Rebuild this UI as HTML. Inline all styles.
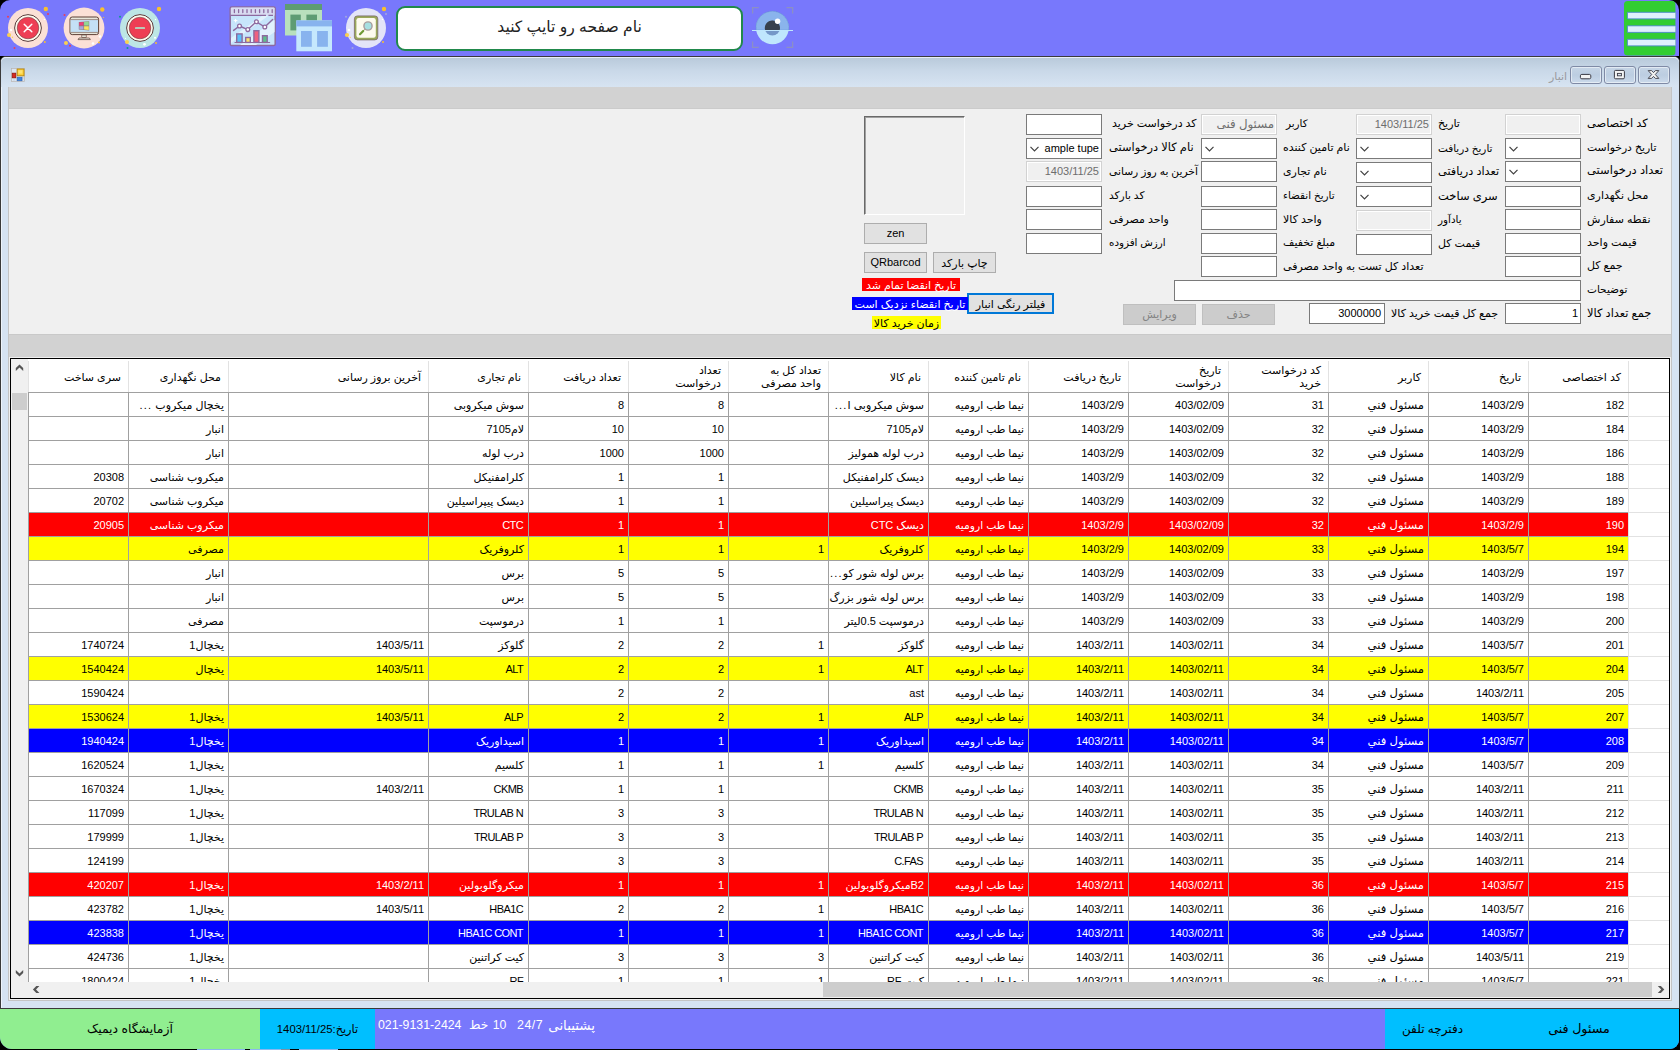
<!DOCTYPE html>
<html lang="fa"><head><meta charset="utf-8"><title>انبار</title>
<style>
html,body{margin:0;padding:0}
body{width:1680px;height:1050px;overflow:hidden;background:#000;position:relative;
 font-family:"Liberation Sans","DejaVu Sans",sans-serif;font-size:11px;color:#000;line-height:13px}
div,span{box-sizing:border-box}
.a{position:absolute}
#top{left:0;top:0;width:1679px;height:56px;background:#7878fc;border-radius:10px 10px 0 0}
#win{left:0;top:56px;width:1680px;height:953px;background:#d6e3f2;border:1px solid #3a3a3a;border-radius:6px 6px 0 0;box-shadow:inset 1px 0 0 #eef4fb}
#ttl{left:1px;top:57px;width:1678px;height:30px;background:linear-gradient(#b8c9da,#c9d8e8 45%,#d7e4f2);border-radius:5px 5px 0 0;box-shadow:inset 0 1px 0 #e8eff8}
.wb{top:66px;width:32px;height:18px;border:1px solid #7f8aa5;border-radius:3px;background:linear-gradient(#c6d5e6,#bccde1 50%,#cbdaeb);box-shadow:inset 0 0 0 1px rgba(255,255,255,.5)}
#client{left:8px;top:87px;width:1664px;height:914px;background:#f0f0f0;border:1px solid #c4c4c4;border-top:0}
#band1{left:9px;top:87px;width:1662px;height:22px;background:#d2d2d2;border-bottom:1px solid #cbcbcb}
#panel{left:9px;top:109px;width:1662px;height:225px;background:#f0f0f0}
#band2{left:9px;top:334px;width:1662px;height:23px;background:#d2d2d2;border-top:1px solid #c9c9c9}
#grid{left:10px;top:358px;width:1660px;height:641px;background:#fff;border:1px solid #000;overflow:hidden}
.lb{position:absolute;white-space:nowrap;direction:rtl;height:13px}
.in{position:absolute;height:21px;background:#fff;border:1px solid #7a7a7a;box-shadow:inset 0 0 0 1px #fff}
.in.d{background:#f0f0f0;border-color:#d2d2d2;color:#6d6d6d}
.in span{position:absolute;right:2px;top:3px;white-space:nowrap}
.btn{position:absolute;height:21px;background:#e1e1e1;border:1px solid #adadad;text-align:center;line-height:18px;white-space:nowrap}
.btn.d{background:#cccccc;border-color:#bfbfbf;color:#838383}
.chev{position:absolute;left:3px;top:7px}

.gr{position:absolute;left:17px;width:1600px;height:24px;border-bottom:1px solid #a0a0a0;background:#fff}
.gr.r{background:#ff0000;color:#fff}.gr.y{background:#ffff00}.gr.b{background:#0000ff;color:#fff}
.gc{position:absolute;top:0;height:23px;border-left:1px solid #a0a0a0;direction:rtl;text-align:right;padding:6px 4px 0 0;white-space:nowrap;overflow:hidden}
.gh{position:absolute;top:2px;height:31px;padding-top:1px;border-left:1px solid #e2e2e2;direction:rtl;text-align:right;padding-right:7px;white-space:nowrap;display:flex;align-items:center;justify-content:flex-start;line-height:13px}
.el{font-style:normal;letter-spacing:1.2px;display:inline-block;direction:ltr}
.rh{position:absolute;left:1617px;width:41px;height:24px;border-left:1px solid #e2e2e2;border-bottom:1px solid #e2e2e2;background:#fff}
</style></head>
<body>
<div class="a" id="top"></div>
<svg class="a" style="left:0;top:0" width="1680" height="56" viewBox="0 0 1680 56"><circle cx="28" cy="28" r="20" fill="#fbe0d6"/><circle cx="28" cy="28" r="13.4" fill="#fdfbee" stroke="#5b3d3d" stroke-width="1"/><circle cx="28" cy="28" r="10.8" fill="#ee3e54" stroke="#5b3d3d" stroke-width="0.5"/><path d="M24.2 24.2 L31.8 31.8 M31.8 24.2 L24.2 31.8" stroke="#fff" stroke-width="1.5" stroke-linecap="round"/><circle cx="45.8" cy="9" r="2.2" fill="#f9c12e"/><circle cx="48" cy="14" r="1" fill="#ee3e54"/><circle cx="8" cy="16.7" r="1" fill="#ee3e54"/><circle cx="9" cy="35" r="2" fill="#fbd04e"/><circle cx="12.5" cy="37.3" r="0.7" fill="#fbd04e"/><circle cx="44.8" cy="42" r="1" fill="#f9c12e"/><circle cx="14.5" cy="48" r="1" fill="#ee3e54"/><circle cx="11" cy="30" r="1.2" fill="#fff"/><circle cx="44.5" cy="19.5" r="0.8" fill="#fff"/><circle cx="84" cy="28" r="20.4" fill="#fbe0d6"/><rect x="70" y="17" width="28.6" height="17.6" rx="2.2" fill="#e9e6da" stroke="#5d4037" stroke-width="1"/><rect x="70.6" y="19.8" width="27.4" height="12.4" fill="#c4e0f6"/><path d="M70.6 19.6 H98 M70.6 32.4 H98" stroke="#6d5147" stroke-width="0.6"/><path d="M78.8 22 L89.2 21.2 V30.4 L78.8 29.6Z" fill="#8a7a78"/><path d="M79.2 22.5 L83.5 22.1 V25.6 H79.2Z" fill="#ee3e7a"/><path d="M84.1 22 L88.8 21.6 V25.6 H84.1Z" fill="#90d895"/><path d="M79.2 26.2 H83.5 V29.6 L79.2 29.2Z" fill="#a9a6da"/><path d="M84.1 26.2 H88.8 V30 L84.1 29.6Z" fill="#f8e660"/><rect x="81.8" y="35" width="4.4" height="2.4" fill="#e9e6da" stroke="#5d4037" stroke-width="0.6"/><path d="M79 38 H89.4 L90.4 39.6 H78Z" fill="#e9e6da" stroke="#5d4037" stroke-width="0.7" stroke-linejoin="round"/><circle cx="102.3" cy="9.5" r="2.2" fill="#f9c12e"/><circle cx="64.5" cy="15" r="1" fill="#ee3e54"/><circle cx="66" cy="43" r="2" fill="#fbd04e"/><circle cx="70" cy="45.8" r="1" fill="#ee3e54"/><circle cx="100" cy="36.5" r="1.2" fill="#fff"/><circle cx="93" cy="43.5" r="1.3" fill="#fff"/><circle cx="99" cy="42.5" r="1" fill="#f9c12e"/><circle cx="103.5" cy="17.5" r="0.6" fill="#f9c12e"/><circle cx="140" cy="28" r="20" fill="#bde6e5"/><circle cx="140" cy="28" r="13.4" fill="#fdfbee" stroke="#5b3d3d" stroke-width="1"/><circle cx="140" cy="28" r="10.8" fill="#ee3e54" stroke="#5b3d3d" stroke-width="0.5"/><rect x="135" y="27" width="10" height="2.1" rx=".4" fill="#b9c7b6"/><circle cx="159" cy="9" r="2.2" fill="#f9c12e"/><circle cx="120" cy="16.7" r="1" fill="#0b9e8a"/><circle cx="127" cy="42" r="2" fill="#fbd04e"/><circle cx="127.5" cy="48" r="1" fill="#0b9e8a"/><circle cx="144.5" cy="44.3" r="1.4" fill="#fff"/><circle cx="155" cy="37.8" r="1" fill="#fff"/><circle cx="156" cy="43" r="1" fill="#f9c12e"/><circle cx="155.5" cy="19.5" r="0.7" fill="#fff"/><circle cx="125.5" cy="38.3" r="0.6" fill="#fff"/><rect x="230.2" y="7" width="45" height="38.6" rx="1.6" fill="#c7e5fb" stroke="#8d6a9f" stroke-width="1.5"/><path d="M231 38 L262 16 H268 L231 43Z M240 45 L274.6 20 V32 L256 45Z" fill="#e2f2fd"/><path d="M230.8 8.4 a1 1 0 0 1 1-1 H273.6 a1 1 0 0 1 1 1 V15.4 H230.8Z" fill="#d9dcf1"/><path d="M230.4 15.4 H266 M268.4 15.4 H273" stroke="#8d6a9f" stroke-width="1.1"/><path d="M234.4 9.6 V12.6 M238.6 9.6 V12.6 M242.8 9.6 V12.6 M247.0 9.6 V12.6 M251.2 9.6 V12.6 M255.4 9.6 V12.6 M259.6 9.6 V12.6 M263.8 9.6 V12.6 M268.0 9.6 V12.6 M272.2 9.6 V12.6 " stroke="#8d6a9f" stroke-width="1.3" stroke-linecap="round"/><path d="M233.6 30.4 L239.5 26 L247.8 29.6 L256.4 21.8 L264.8 27 L272.6 19.4" fill="none" stroke="#8d6a9f" stroke-width="1.4" stroke-linecap="round" stroke-linejoin="round"/><circle cx="239.5" cy="26" r="1.9" fill="#fff" stroke="#8d6a9f" stroke-width="1.3"/><circle cx="247.8" cy="29.6" r="1.9" fill="#fff" stroke="#8d6a9f" stroke-width="1.3"/><circle cx="256.4" cy="21.8" r="1.9" fill="#fff" stroke="#8d6a9f" stroke-width="1.3"/><circle cx="264.8" cy="27" r="1.9" fill="#fff" stroke="#8d6a9f" stroke-width="1.3"/><rect x="236.7" y="33.9" width="5.4" height="8.5" fill="#5bc0f8" stroke="#8d6a9f" stroke-width="1.4"/><rect x="245.7" y="37.5" width="4.6" height="4.899999999999999" fill="#fde36d" stroke="#8d6a9f" stroke-width="1.4"/><rect x="253.9" y="30.7" width="5" height="11.7" fill="#f0607f" stroke="#8d6a9f" stroke-width="1.4"/><rect x="262.5" y="35.7" width="4.7" height="6.699999999999996" fill="#5dc08b" stroke="#8d6a9f" stroke-width="1.4"/><path d="M235 42.5 H269.6" stroke="#8d6a9f" stroke-width="1.2" stroke-linecap="round"/><path d="M235.6 18.4 L236.3 20 L238 20.6 L236.3 21.3 L235.6 23 L234.9 21.3 L233.2 20.6 L234.9 20Z" fill="#fff"/><rect x="285" y="4" width="37" height="31.5" fill="#b8e0bd"/><rect x="285" y="4" width="37" height="6" fill="#5e9c73"/><rect x="290.4" y="14.6" width="10.4" height="15.8" fill="#5e9c73"/><rect x="306.4" y="14.6" width="10.6" height="15.8" fill="#5e9c73"/><rect x="296.3" y="20.4" width="35.7" height="30.9" fill="#c5e8fd"/><rect x="296.3" y="20.4" width="35.7" height="6" fill="#88b3ee"/><rect x="301" y="31" width="10.8" height="15.8" fill="#88b3ee"/><rect x="317.1" y="31" width="10.8" height="15.8" fill="#88b3ee"/><circle cx="366" cy="28" r="20" fill="#e3e4f8"/><rect x="354.4" y="15.9" width="23.4" height="24" rx="3" fill="#9aa85a" stroke="#7b6a6a" stroke-width="0.8"/><rect x="356.4" y="18" width="19.4" height="19.8" rx="2.2" fill="#fdfbee"/><path d="M365.2 29 L363.4 30.8" stroke="#9c9090" stroke-width="0.9"/><path d="M363.2 31 L360 34.2" stroke="#6f9a35" stroke-width="2.2" stroke-linecap="round"/><circle cx="368" cy="26" r="4.1" fill="#a6dfe1" stroke="#a79c9c" stroke-width="1.4"/><circle cx="384" cy="9" r="2.2" fill="#f9c12e"/><circle cx="386" cy="14" r="1" fill="#a3a6de"/><circle cx="346" cy="16.7" r="1" fill="#a3a6de"/><circle cx="347" cy="35" r="2.1" fill="#fbd04e"/><circle cx="350.3" cy="37.3" r="0.6" fill="#fbd04e"/><circle cx="383" cy="42" r="1" fill="#f9c12e"/><circle cx="352.5" cy="48" r="1" fill="#a3a6de"/><circle cx="349" cy="30" r="1.3" fill="#fff"/><circle cx="382.5" cy="19.5" r="0.7" fill="#fff"/><circle cx="772.4" cy="27.8" r="16.4" fill="#bfe6fd"/><path d="M756.2 30.2 A16.4 16.4 0 1 1 788.6 30.2Z" fill="#8ab4ec" stroke="#5f8fce" stroke-width="0.5"/><circle cx="772.4" cy="28" r="7.6" fill="#7497c8"/><path d="M765.1 30.2 A7.6 7.6 0 1 1 779.7 30.2Z" fill="#37404e"/><path d="M752 30.5 H793" stroke="#bfe6fd" stroke-width="1"/><circle cx="777.6" cy="21.3" r="2.7" fill="#fff"/><path d="M752.6 13.6 V7.6 H758.8 M786.4 7.6 H792.6 V13.6 M752.6 41.6 V47.4 H758.8 M786.4 47.4 H792.6 V41.6" fill="none" stroke="#8b8fc4" stroke-width="1.3"/><rect x="1624" y="1" width="51.4" height="54.6" rx="3.5" fill="#32cd32"/><rect x="1627.4" y="12.3" width="48" height="6.6" fill="#dff0fc"/><path d="M1675.4 12.3 H1627.4 V18.9 H1675.4" fill="none" stroke="#4a86c8" stroke-width="0.9"/><rect x="1627.4" y="25.8" width="48" height="6.6" fill="#dff0fc"/><path d="M1675.4 25.8 H1627.4 V32.4 H1675.4" fill="none" stroke="#4a86c8" stroke-width="0.9"/><rect x="1627.4" y="39.3" width="48" height="6.6" fill="#dff0fc"/><path d="M1675.4 39.3 H1627.4 V45.9 H1675.4" fill="none" stroke="#4a86c8" stroke-width="0.9"/></svg>
<div class="a" style="left:396px;top:6px;width:347px;height:45px;background:#fff;border:2px solid #21894b;border-radius:9px;text-align:center;direction:rtl;font-size:15.6px;line-height:38px;color:#222">نام صفحه رو تایپ کنید</div>
<div class="a" id="win"></div><div class="a" id="ttl"></div>
<svg class="a" style="left:10px;top:67px" width="16" height="16" viewBox="10 67 16 16"><rect x="11.4" y="68.5" width="13" height="13" fill="#dbe6f2" stroke="#b9b4b0" stroke-width="0.7"/><path d="M16.6 68.5 V81.5 M11.4 72.8 H16.6 M11.4 78 H24.4 M22.8 76 V81.5 M14 78 V81.5" stroke="#c7c7cc" stroke-width="0.6"/><rect x="17.2" y="69" width="6.8" height="6.8" fill="#fbd03a" stroke="#b8860b" stroke-width="0.9"/><rect x="18.4" y="70.2" width="4" height="3.4" fill="#fde98a" opacity=".7"/><rect x="12.2" y="73.2" width="3.6" height="4.6" fill="#d82a20" stroke="#8e0f0a" stroke-width="0.7"/><rect x="17.2" y="77.2" width="4.8" height="3.6" fill="#3e86e0" stroke="#2a62b4" stroke-width="0.6"/></svg>
<div class="a" style="left:1549px;top:67px;width:27px;height:18px;direction:rtl;font-size:11px;line-height:18px;color:#9a9a9e;text-align:left">انبار</div>
<div class="a wb" style="left:1570px"></div><div class="a wb" style="left:1604px"></div><div class="a wb" style="left:1638px"></div>
<svg class="a" style="left:1570px;top:66px" width="100" height="18" viewBox="1570 66 100 18"><rect x="1580.4" y="74.4" width="10.4" height="4.4" rx="1.4" fill="#f4f4f4" stroke="#3a3a44" stroke-width="1"/><rect x="1614.4" y="70.4" width="10" height="8.4" rx="1.2" fill="#f4f4f4" stroke="#3a3a44" stroke-width="1"/><rect x="1617.4" y="73.4" width="4" height="2.4" fill="#dfe6f0" stroke="#3a3a44" stroke-width="0.9"/><path d="M1648.2 70.6 h3.4 l1.9 2 l1.9 -2 h3.4 l-3.5 3.9 l3.5 3.9 h-3.4 l-1.9 -2 l-1.9 2 h-3.4 l3.5 -3.9 Z" fill="#f4f4f4" stroke="#3a3a44" stroke-width="0.9" stroke-linejoin="round"/></svg>
<div class="a" id="client"></div><div class="a" id="band1"></div><div class="a" id="panel"></div><div class="a" id="band2"></div>
<div class="lb" style="left:1587px;top:117px;font-size:11.38px;">کد اختصاصی</div>
<div class="in d" style="left:1505px;top:114px;width:76px"></div>
<div class="lb" style="left:1587px;top:141px;font-size:10.8px;">تاریخ درخواست</div>
<div class="in" style="left:1505px;top:138px;width:76px"><svg class="chev" width="9" height="6" viewBox="0 0 9 6"><path d="M0.5 0.8 L4.5 4.8 L8.5 0.8" fill="none" stroke="#404040" stroke-width="1.2"/></svg></div>
<div class="lb" style="left:1587px;top:164px;font-size:11.53px;">تعداد درخواستی</div>
<div class="in" style="left:1505px;top:161px;width:76px"><svg class="chev" width="9" height="6" viewBox="0 0 9 6"><path d="M0.5 0.8 L4.5 4.8 L8.5 0.8" fill="none" stroke="#404040" stroke-width="1.2"/></svg></div>
<div class="lb" style="left:1587px;top:189px;">محل نگهداری</div>
<div class="in" style="left:1505px;top:186px;width:76px"></div>
<div class="lb" style="left:1587px;top:213px;">نقطه سفارش</div>
<div class="in" style="left:1505px;top:209px;width:76px"></div>
<div class="lb" style="left:1587px;top:236px;">قیمت واحد</div>
<div class="in" style="left:1505px;top:233px;width:76px"></div>
<div class="lb" style="left:1587px;top:259px;">جمع کل</div>
<div class="in" style="left:1505px;top:256px;width:76px"></div>
<div class="lb" style="left:1587px;top:283px;font-size:10.54px;">توضیحات</div>
<div class="lb" style="left:1587px;top:307px;font-size:11.4px;">جمع تعداد کالا</div>
<div class="in" style="left:1505px;top:303px;width:76px"><span>1</span></div>
<div class="in" style="left:1174px;top:280px;width:407px"></div>
<div class="lb" style="left:1438px;top:117px;">تاریخ</div>
<div class="in d" style="left:1356px;top:114px;width:76px"><span>1403/11/25</span></div>
<div class="lb" style="left:1438px;top:142px;font-size:10.4px;">تاریخ دریافت</div>
<div class="in" style="left:1356px;top:138px;width:76px"><svg class="chev" width="9" height="6" viewBox="0 0 9 6"><path d="M0.5 0.8 L4.5 4.8 L8.5 0.8" fill="none" stroke="#404040" stroke-width="1.2"/></svg></div>
<div class="lb" style="left:1438px;top:165px;font-size:11.3px;">تعداد دریافتی</div>
<div class="in" style="left:1356px;top:162px;width:76px"><svg class="chev" width="9" height="6" viewBox="0 0 9 6"><path d="M0.5 0.8 L4.5 4.8 L8.5 0.8" fill="none" stroke="#404040" stroke-width="1.2"/></svg></div>
<div class="lb" style="left:1438px;top:190px;font-size:11.5px;">سری ساخت</div>
<div class="in" style="left:1356px;top:186px;width:76px"><svg class="chev" width="9" height="6" viewBox="0 0 9 6"><path d="M0.5 0.8 L4.5 4.8 L8.5 0.8" fill="none" stroke="#404040" stroke-width="1.2"/></svg></div>
<div class="lb" style="left:1438px;top:213px;font-size:10.4px;">یادآور</div>
<div class="in d" style="left:1356px;top:210px;width:76px"></div>
<div class="lb" style="left:1438px;top:237px;">قیمت کل</div>
<div class="in" style="left:1356px;top:234px;width:76px"></div>
<div class="lb" style="left:1391px;top:307px;">جمع کل قیمت خرید کالا</div>
<div class="in" style="left:1309px;top:303px;width:76px"><span><i style="font-style:normal;margin-right:1px">3000000</i></span></div>
<div class="lb" style="left:1286px;top:117px;font-size:10.3px;">کاربر</div>
<div class="in d" style="left:1201px;top:114px;width:76px"><span><i style="font-style:normal;font-size:11.8px">مسئول فنی</i></span></div>
<div class="lb" style="left:1283px;top:141px;">نام تامین کننده</div>
<div class="in" style="left:1201px;top:138px;width:76px"><svg class="chev" width="9" height="6" viewBox="0 0 9 6"><path d="M0.5 0.8 L4.5 4.8 L8.5 0.8" fill="none" stroke="#404040" stroke-width="1.2"/></svg></div>
<div class="lb" style="left:1283px;top:165px;">نام تجاری</div>
<div class="in" style="left:1201px;top:161px;width:76px"></div>
<div class="lb" style="left:1283px;top:189px;font-size:10.4px;">تاریخ انقضاء</div>
<div class="in" style="left:1201px;top:186px;width:76px"></div>
<div class="lb" style="left:1283px;top:213px;">واحد کالا</div>
<div class="in" style="left:1201px;top:209px;width:76px"></div>
<div class="lb" style="left:1283px;top:236px;">مبلغ تخفیف</div>
<div class="in" style="left:1201px;top:233px;width:76px"></div>
<div class="lb" style="left:1283px;top:260px;">تعداد کل تست به واحد مصرفی</div>
<div class="in" style="left:1201px;top:256px;width:76px"></div>
<div class="lb" style="left:1112px;top:117px;">کد درخواست خرید</div>
<div class="in" style="left:1026px;top:114px;width:76px"></div>
<div class="lb" style="left:1109px;top:141px;font-size:11.4px;">نام کالا درخواستی</div>
<div class="in" style="left:1026px;top:138px;width:76px"><svg class="chev" width="9" height="6" viewBox="0 0 9 6"><path d="M0.5 0.8 L4.5 4.8 L8.5 0.8" fill="none" stroke="#404040" stroke-width="1.2"/></svg><span>ample tupe</span></div>
<div class="lb" style="left:1109px;top:165px;font-size:10.7px;">آخرین به روز رسانی</div>
<div class="in d" style="left:1026px;top:161px;width:76px"><span>1403/11/25</span></div>
<div class="lb" style="left:1109px;top:189px;font-size:10.6px;">کد بارکد</div>
<div class="in" style="left:1026px;top:186px;width:76px"></div>
<div class="lb" style="left:1109px;top:213px;">واحد مصرفی</div>
<div class="in" style="left:1026px;top:209px;width:76px"></div>
<div class="lb" style="left:1109px;top:236px;font-size:10.3px;">ارزش افزوده</div>
<div class="in" style="left:1026px;top:233px;width:76px"></div>
<div class="a" style="left:864px;top:116px;width:101px;height:99px;background:#f0f0f0;border:1px solid;border-color:#696969 #fff #fff #696969;box-shadow:inset 1px 1px 0 #a0a0a0"></div>
<div class="btn" style="left:864px;top:223px;width:63px">zen</div>
<div class="btn" style="left:864px;top:252px;width:63px">QRbarcod</div>
<div class="btn" style="left:933px;top:252px;width:63px;direction:rtl;line-height:20px">چاپ بارکد</div>
<div class="btn" style="left:967px;top:293px;width:87px;direction:rtl;border:2px solid #0078d7;line-height:18px">فیلتر رنگی انبار</div>
<div class="btn d" style="left:1123px;top:304px;width:73px;direction:rtl">ویرایش</div>
<div class="btn d" style="left:1202px;top:304px;width:73px;direction:rtl">حذف</div>
<div class="lb" style="left:862px;top:278px;width:98px;background:#ff0000;color:#fff;text-align:center;line-height:15px">تاریخ انقضا تمام شد</div>
<div class="lb" style="left:852px;top:297px;width:116px;background:#0000ff;color:#fff;text-align:center;line-height:15px">تاریخ انقضاء نزدیک است</div>
<div class="lb" style="left:872px;top:316px;width:69px;background:#ffff00;text-align:center;line-height:15px">زمان خرید کالا</div>
<div class="a" id="grid">
<div class="a" style="left:17px;top:0;width:1641px;height:34px;border-bottom:1px solid #a0a0a0;background:#fff">
<div class="gh" style="left:1600px;width:41px"></div>
<div class="gh" style="left:1500px;width:100px"><span>کد اختصاصی</span></div>
<div class="gh" style="left:1400px;width:100px"><span>تاریخ</span></div>
<div class="gh" style="left:1300px;width:100px"><span>کاربر</span></div>
<div class="gh" style="left:1200px;width:100px"><span>کد درخواست<br>خرید</span></div>
<div class="gh" style="left:1100px;width:100px"><span>تاریخ<br>درخواست</span></div>
<div class="gh" style="left:1000px;width:100px"><span>تاریخ دریافت</span></div>
<div class="gh" style="left:900px;width:100px"><span>نام تامین کننده</span></div>
<div class="gh" style="left:800px;width:100px"><span>نام کالا</span></div>
<div class="gh" style="left:700px;width:100px"><span>تعداد کل به<br>واحد مصرفی</span></div>
<div class="gh" style="left:600px;width:100px"><span>تعداد<br>درخواست</span></div>
<div class="gh" style="left:500px;width:100px"><span>تعداد دریافت</span></div>
<div class="gh" style="left:400px;width:100px"><span>نام تجاری</span></div>
<div class="gh" style="left:200px;width:200px"><span>آخرین بروز رسانی</span></div>
<div class="gh" style="left:100px;width:100px"><span>محل نگهداری</span></div>
<div class="gh" style="left:0px;width:100px"><span>سری ساخت</span></div>
</div>
<div class="gr " style="top:34px">
<div class="gc" style="left:1500px;width:100px">182</div>
<div class="gc" style="left:1400px;width:100px">1403/2/9</div>
<div class="gc" style="left:1300px;width:100px;font-size:11.6px;padding-top:5px">مسئول فني</div>
<div class="gc" style="left:1200px;width:100px">31</div>
<div class="gc" style="left:1100px;width:100px">403/02/09</div>
<div class="gc" style="left:1000px;width:100px">1403/2/9</div>
<div class="gc" style="left:900px;width:100px;font-size:10.75px">نیما طب ارومیه</div>
<div class="gc" style="left:800px;width:100px">سوش میکروبی ا<i class="el">...</i></div>
<div class="gc" style="left:700px;width:100px"></div>
<div class="gc" style="left:600px;width:100px">8</div>
<div class="gc" style="left:500px;width:100px">8</div>
<div class="gc" style="left:400px;width:100px">سوش میکروبی</div>
<div class="gc" style="left:200px;width:200px"></div>
<div class="gc" style="left:100px;width:100px">یخچال میکروب <i class="el">...</i></div>
<div class="gc" style="left:0px;width:100px"></div>
</div>
<div class="rh" style="top:34px"></div>
<div class="gr " style="top:58px">
<div class="gc" style="left:1500px;width:100px">184</div>
<div class="gc" style="left:1400px;width:100px">1403/2/9</div>
<div class="gc" style="left:1300px;width:100px;font-size:11.6px;padding-top:5px">مسئول فني</div>
<div class="gc" style="left:1200px;width:100px">32</div>
<div class="gc" style="left:1100px;width:100px">1403/02/09</div>
<div class="gc" style="left:1000px;width:100px">1403/2/9</div>
<div class="gc" style="left:900px;width:100px;font-size:10.75px">نیما طب ارومیه</div>
<div class="gc" style="left:800px;width:100px">لام7105</div>
<div class="gc" style="left:700px;width:100px"></div>
<div class="gc" style="left:600px;width:100px">10</div>
<div class="gc" style="left:500px;width:100px">10</div>
<div class="gc" style="left:400px;width:100px">لام7105</div>
<div class="gc" style="left:200px;width:200px"></div>
<div class="gc" style="left:100px;width:100px">انبار</div>
<div class="gc" style="left:0px;width:100px"></div>
</div>
<div class="rh" style="top:58px"></div>
<div class="gr " style="top:82px">
<div class="gc" style="left:1500px;width:100px">186</div>
<div class="gc" style="left:1400px;width:100px">1403/2/9</div>
<div class="gc" style="left:1300px;width:100px;font-size:11.6px;padding-top:5px">مسئول فني</div>
<div class="gc" style="left:1200px;width:100px">32</div>
<div class="gc" style="left:1100px;width:100px">1403/02/09</div>
<div class="gc" style="left:1000px;width:100px">1403/2/9</div>
<div class="gc" style="left:900px;width:100px;font-size:10.75px">نیما طب ارومیه</div>
<div class="gc" style="left:800px;width:100px">درب لوله همولیز</div>
<div class="gc" style="left:700px;width:100px"></div>
<div class="gc" style="left:600px;width:100px">1000</div>
<div class="gc" style="left:500px;width:100px">1000</div>
<div class="gc" style="left:400px;width:100px">درب لوله</div>
<div class="gc" style="left:200px;width:200px"></div>
<div class="gc" style="left:100px;width:100px">انبار</div>
<div class="gc" style="left:0px;width:100px"></div>
</div>
<div class="rh" style="top:82px"></div>
<div class="gr " style="top:106px">
<div class="gc" style="left:1500px;width:100px">188</div>
<div class="gc" style="left:1400px;width:100px">1403/2/9</div>
<div class="gc" style="left:1300px;width:100px;font-size:11.6px;padding-top:5px">مسئول فني</div>
<div class="gc" style="left:1200px;width:100px">32</div>
<div class="gc" style="left:1100px;width:100px">1403/02/09</div>
<div class="gc" style="left:1000px;width:100px">1403/2/9</div>
<div class="gc" style="left:900px;width:100px;font-size:10.75px">نیما طب ارومیه</div>
<div class="gc" style="left:800px;width:100px">دیسک کلرامفنیکل</div>
<div class="gc" style="left:700px;width:100px"></div>
<div class="gc" style="left:600px;width:100px">1</div>
<div class="gc" style="left:500px;width:100px">1</div>
<div class="gc" style="left:400px;width:100px">کلرامفنیکل</div>
<div class="gc" style="left:200px;width:200px"></div>
<div class="gc" style="left:100px;width:100px">میکروب شناسی</div>
<div class="gc" style="left:0px;width:100px">20308</div>
</div>
<div class="rh" style="top:106px"></div>
<div class="gr " style="top:130px">
<div class="gc" style="left:1500px;width:100px">189</div>
<div class="gc" style="left:1400px;width:100px">1403/2/9</div>
<div class="gc" style="left:1300px;width:100px;font-size:11.6px;padding-top:5px">مسئول فني</div>
<div class="gc" style="left:1200px;width:100px">32</div>
<div class="gc" style="left:1100px;width:100px">1403/02/09</div>
<div class="gc" style="left:1000px;width:100px">1403/2/9</div>
<div class="gc" style="left:900px;width:100px;font-size:10.75px">نیما طب ارومیه</div>
<div class="gc" style="left:800px;width:100px">دیسک پیراسیلین</div>
<div class="gc" style="left:700px;width:100px"></div>
<div class="gc" style="left:600px;width:100px">1</div>
<div class="gc" style="left:500px;width:100px">1</div>
<div class="gc" style="left:400px;width:100px">دیسک پیپراسیلین</div>
<div class="gc" style="left:200px;width:200px"></div>
<div class="gc" style="left:100px;width:100px">میکروب شناسی</div>
<div class="gc" style="left:0px;width:100px">20702</div>
</div>
<div class="rh" style="top:130px"></div>
<div class="gr r" style="top:154px">
<div class="gc" style="left:1500px;width:100px">190</div>
<div class="gc" style="left:1400px;width:100px">1403/2/9</div>
<div class="gc" style="left:1300px;width:100px;font-size:11.6px;padding-top:5px">مسئول فني</div>
<div class="gc" style="left:1200px;width:100px">32</div>
<div class="gc" style="left:1100px;width:100px">1403/02/09</div>
<div class="gc" style="left:1000px;width:100px">1403/2/9</div>
<div class="gc" style="left:900px;width:100px;font-size:10.75px">نیما طب ارومیه</div>
<div class="gc" style="left:800px;width:100px">دیسک CTC</div>
<div class="gc" style="left:700px;width:100px"></div>
<div class="gc" style="left:600px;width:100px">1</div>
<div class="gc" style="left:500px;width:100px">1</div>
<div class="gc" style="left:400px;width:100px;letter-spacing:-.6px;padding-right:5px">CTC</div>
<div class="gc" style="left:200px;width:200px"></div>
<div class="gc" style="left:100px;width:100px">میکروب شناسی</div>
<div class="gc" style="left:0px;width:100px">20905</div>
</div>
<div class="rh" style="top:154px"></div>
<div class="gr y" style="top:178px">
<div class="gc" style="left:1500px;width:100px">194</div>
<div class="gc" style="left:1400px;width:100px">1403/5/7</div>
<div class="gc" style="left:1300px;width:100px;font-size:11.6px;padding-top:5px">مسئول فني</div>
<div class="gc" style="left:1200px;width:100px">33</div>
<div class="gc" style="left:1100px;width:100px">1403/02/09</div>
<div class="gc" style="left:1000px;width:100px">1403/2/9</div>
<div class="gc" style="left:900px;width:100px;font-size:10.75px">نیما طب ارومیه</div>
<div class="gc" style="left:800px;width:100px">کلروفریک</div>
<div class="gc" style="left:700px;width:100px">1</div>
<div class="gc" style="left:600px;width:100px">1</div>
<div class="gc" style="left:500px;width:100px">1</div>
<div class="gc" style="left:400px;width:100px">کلروفریک</div>
<div class="gc" style="left:200px;width:200px"></div>
<div class="gc" style="left:100px;width:100px">مصرفی</div>
<div class="gc" style="left:0px;width:100px"></div>
</div>
<div class="rh" style="top:178px"></div>
<div class="gr " style="top:202px">
<div class="gc" style="left:1500px;width:100px">197</div>
<div class="gc" style="left:1400px;width:100px">1403/2/9</div>
<div class="gc" style="left:1300px;width:100px;font-size:11.6px;padding-top:5px">مسئول فني</div>
<div class="gc" style="left:1200px;width:100px">33</div>
<div class="gc" style="left:1100px;width:100px">1403/02/09</div>
<div class="gc" style="left:1000px;width:100px">1403/2/9</div>
<div class="gc" style="left:900px;width:100px;font-size:10.75px">نیما طب ارومیه</div>
<div class="gc" style="left:800px;width:100px">برس لوله شور کو<i class="el">...</i></div>
<div class="gc" style="left:700px;width:100px"></div>
<div class="gc" style="left:600px;width:100px">5</div>
<div class="gc" style="left:500px;width:100px">5</div>
<div class="gc" style="left:400px;width:100px">برس</div>
<div class="gc" style="left:200px;width:200px"></div>
<div class="gc" style="left:100px;width:100px">انبار</div>
<div class="gc" style="left:0px;width:100px"></div>
</div>
<div class="rh" style="top:202px"></div>
<div class="gr " style="top:226px">
<div class="gc" style="left:1500px;width:100px">198</div>
<div class="gc" style="left:1400px;width:100px">1403/2/9</div>
<div class="gc" style="left:1300px;width:100px;font-size:11.6px;padding-top:5px">مسئول فني</div>
<div class="gc" style="left:1200px;width:100px">33</div>
<div class="gc" style="left:1100px;width:100px">1403/02/09</div>
<div class="gc" style="left:1000px;width:100px">1403/2/9</div>
<div class="gc" style="left:900px;width:100px;font-size:10.75px">نیما طب ارومیه</div>
<div class="gc" style="left:800px;width:100px">برس لوله شور بزرگ</div>
<div class="gc" style="left:700px;width:100px"></div>
<div class="gc" style="left:600px;width:100px">5</div>
<div class="gc" style="left:500px;width:100px">5</div>
<div class="gc" style="left:400px;width:100px">برس</div>
<div class="gc" style="left:200px;width:200px"></div>
<div class="gc" style="left:100px;width:100px">انبار</div>
<div class="gc" style="left:0px;width:100px"></div>
</div>
<div class="rh" style="top:226px"></div>
<div class="gr " style="top:250px">
<div class="gc" style="left:1500px;width:100px">200</div>
<div class="gc" style="left:1400px;width:100px">1403/2/9</div>
<div class="gc" style="left:1300px;width:100px;font-size:11.6px;padding-top:5px">مسئول فني</div>
<div class="gc" style="left:1200px;width:100px">33</div>
<div class="gc" style="left:1100px;width:100px">1403/02/09</div>
<div class="gc" style="left:1000px;width:100px">1403/2/9</div>
<div class="gc" style="left:900px;width:100px;font-size:10.75px">نیما طب ارومیه</div>
<div class="gc" style="left:800px;width:100px">درموسپت 0.5لیتر</div>
<div class="gc" style="left:700px;width:100px"></div>
<div class="gc" style="left:600px;width:100px">1</div>
<div class="gc" style="left:500px;width:100px">1</div>
<div class="gc" style="left:400px;width:100px">درموسپت</div>
<div class="gc" style="left:200px;width:200px"></div>
<div class="gc" style="left:100px;width:100px">مصرفی</div>
<div class="gc" style="left:0px;width:100px"></div>
</div>
<div class="rh" style="top:250px"></div>
<div class="gr " style="top:274px">
<div class="gc" style="left:1500px;width:100px">201</div>
<div class="gc" style="left:1400px;width:100px">1403/5/7</div>
<div class="gc" style="left:1300px;width:100px;font-size:11.6px;padding-top:5px">مسئول فني</div>
<div class="gc" style="left:1200px;width:100px">34</div>
<div class="gc" style="left:1100px;width:100px">1403/02/11</div>
<div class="gc" style="left:1000px;width:100px">1403/2/11</div>
<div class="gc" style="left:900px;width:100px;font-size:10.75px">نیما طب ارومیه</div>
<div class="gc" style="left:800px;width:100px">گلوکز</div>
<div class="gc" style="left:700px;width:100px">1</div>
<div class="gc" style="left:600px;width:100px">2</div>
<div class="gc" style="left:500px;width:100px">2</div>
<div class="gc" style="left:400px;width:100px">گلوکز</div>
<div class="gc" style="left:200px;width:200px">1403/5/11</div>
<div class="gc" style="left:100px;width:100px">یخچال1</div>
<div class="gc" style="left:0px;width:100px">1740724</div>
</div>
<div class="rh" style="top:274px"></div>
<div class="gr y" style="top:298px">
<div class="gc" style="left:1500px;width:100px">204</div>
<div class="gc" style="left:1400px;width:100px">1403/5/7</div>
<div class="gc" style="left:1300px;width:100px;font-size:11.6px;padding-top:5px">مسئول فني</div>
<div class="gc" style="left:1200px;width:100px">34</div>
<div class="gc" style="left:1100px;width:100px">1403/02/11</div>
<div class="gc" style="left:1000px;width:100px">1403/2/11</div>
<div class="gc" style="left:900px;width:100px;font-size:10.75px">نیما طب ارومیه</div>
<div class="gc" style="left:800px;width:100px;letter-spacing:-.6px;padding-right:5px">ALT</div>
<div class="gc" style="left:700px;width:100px">1</div>
<div class="gc" style="left:600px;width:100px">2</div>
<div class="gc" style="left:500px;width:100px">2</div>
<div class="gc" style="left:400px;width:100px;letter-spacing:-.6px;padding-right:5px">ALT</div>
<div class="gc" style="left:200px;width:200px">1403/5/11</div>
<div class="gc" style="left:100px;width:100px">یخچال</div>
<div class="gc" style="left:0px;width:100px">1540424</div>
</div>
<div class="rh" style="top:298px"></div>
<div class="gr " style="top:322px">
<div class="gc" style="left:1500px;width:100px">205</div>
<div class="gc" style="left:1400px;width:100px">1403/2/11</div>
<div class="gc" style="left:1300px;width:100px;font-size:11.6px;padding-top:5px">مسئول فني</div>
<div class="gc" style="left:1200px;width:100px">34</div>
<div class="gc" style="left:1100px;width:100px">1403/02/11</div>
<div class="gc" style="left:1000px;width:100px">1403/2/11</div>
<div class="gc" style="left:900px;width:100px;font-size:10.75px">نیما طب ارومیه</div>
<div class="gc" style="left:800px;width:100px">ast</div>
<div class="gc" style="left:700px;width:100px"></div>
<div class="gc" style="left:600px;width:100px">2</div>
<div class="gc" style="left:500px;width:100px">2</div>
<div class="gc" style="left:400px;width:100px"></div>
<div class="gc" style="left:200px;width:200px"></div>
<div class="gc" style="left:100px;width:100px"></div>
<div class="gc" style="left:0px;width:100px">1590424</div>
</div>
<div class="rh" style="top:322px"></div>
<div class="gr y" style="top:346px">
<div class="gc" style="left:1500px;width:100px">207</div>
<div class="gc" style="left:1400px;width:100px">1403/5/7</div>
<div class="gc" style="left:1300px;width:100px;font-size:11.6px;padding-top:5px">مسئول فني</div>
<div class="gc" style="left:1200px;width:100px">34</div>
<div class="gc" style="left:1100px;width:100px">1403/02/11</div>
<div class="gc" style="left:1000px;width:100px">1403/2/11</div>
<div class="gc" style="left:900px;width:100px;font-size:10.75px">نیما طب ارومیه</div>
<div class="gc" style="left:800px;width:100px;letter-spacing:-.6px;padding-right:5px">ALP</div>
<div class="gc" style="left:700px;width:100px">1</div>
<div class="gc" style="left:600px;width:100px">2</div>
<div class="gc" style="left:500px;width:100px">2</div>
<div class="gc" style="left:400px;width:100px;letter-spacing:-.6px;padding-right:5px">ALP</div>
<div class="gc" style="left:200px;width:200px">1403/5/11</div>
<div class="gc" style="left:100px;width:100px">یخچال1</div>
<div class="gc" style="left:0px;width:100px">1530624</div>
</div>
<div class="rh" style="top:346px"></div>
<div class="gr b" style="top:370px">
<div class="gc" style="left:1500px;width:100px">208</div>
<div class="gc" style="left:1400px;width:100px">1403/5/7</div>
<div class="gc" style="left:1300px;width:100px;font-size:11.6px;padding-top:5px">مسئول فني</div>
<div class="gc" style="left:1200px;width:100px">34</div>
<div class="gc" style="left:1100px;width:100px">1403/02/11</div>
<div class="gc" style="left:1000px;width:100px">1403/2/11</div>
<div class="gc" style="left:900px;width:100px;font-size:10.75px">نیما طب ارومیه</div>
<div class="gc" style="left:800px;width:100px">اسیداوریک</div>
<div class="gc" style="left:700px;width:100px">1</div>
<div class="gc" style="left:600px;width:100px">1</div>
<div class="gc" style="left:500px;width:100px">1</div>
<div class="gc" style="left:400px;width:100px">اسیداوریک</div>
<div class="gc" style="left:200px;width:200px"></div>
<div class="gc" style="left:100px;width:100px">یخچال1</div>
<div class="gc" style="left:0px;width:100px">1940424</div>
</div>
<div class="rh" style="top:370px"></div>
<div class="gr " style="top:394px">
<div class="gc" style="left:1500px;width:100px">209</div>
<div class="gc" style="left:1400px;width:100px">1403/5/7</div>
<div class="gc" style="left:1300px;width:100px;font-size:11.6px;padding-top:5px">مسئول فني</div>
<div class="gc" style="left:1200px;width:100px">34</div>
<div class="gc" style="left:1100px;width:100px">1403/02/11</div>
<div class="gc" style="left:1000px;width:100px">1403/2/11</div>
<div class="gc" style="left:900px;width:100px;font-size:10.75px">نیما طب ارومیه</div>
<div class="gc" style="left:800px;width:100px">کلسیم</div>
<div class="gc" style="left:700px;width:100px">1</div>
<div class="gc" style="left:600px;width:100px">1</div>
<div class="gc" style="left:500px;width:100px">1</div>
<div class="gc" style="left:400px;width:100px">کلسیم</div>
<div class="gc" style="left:200px;width:200px"></div>
<div class="gc" style="left:100px;width:100px">یخچال1</div>
<div class="gc" style="left:0px;width:100px">1620524</div>
</div>
<div class="rh" style="top:394px"></div>
<div class="gr " style="top:418px">
<div class="gc" style="left:1500px;width:100px">211</div>
<div class="gc" style="left:1400px;width:100px">1403/2/11</div>
<div class="gc" style="left:1300px;width:100px;font-size:11.6px;padding-top:5px">مسئول فني</div>
<div class="gc" style="left:1200px;width:100px">35</div>
<div class="gc" style="left:1100px;width:100px">1403/02/11</div>
<div class="gc" style="left:1000px;width:100px">1403/2/11</div>
<div class="gc" style="left:900px;width:100px;font-size:10.75px">نیما طب ارومیه</div>
<div class="gc" style="left:800px;width:100px;letter-spacing:-.6px;padding-right:5px">CKMB</div>
<div class="gc" style="left:700px;width:100px"></div>
<div class="gc" style="left:600px;width:100px">1</div>
<div class="gc" style="left:500px;width:100px">1</div>
<div class="gc" style="left:400px;width:100px;letter-spacing:-.6px;padding-right:5px">CKMB</div>
<div class="gc" style="left:200px;width:200px">1403/2/11</div>
<div class="gc" style="left:100px;width:100px">یخچال1</div>
<div class="gc" style="left:0px;width:100px">1670324</div>
</div>
<div class="rh" style="top:418px"></div>
<div class="gr " style="top:442px">
<div class="gc" style="left:1500px;width:100px">212</div>
<div class="gc" style="left:1400px;width:100px">1403/2/11</div>
<div class="gc" style="left:1300px;width:100px;font-size:11.6px;padding-top:5px">مسئول فني</div>
<div class="gc" style="left:1200px;width:100px">35</div>
<div class="gc" style="left:1100px;width:100px">1403/02/11</div>
<div class="gc" style="left:1000px;width:100px">1403/2/11</div>
<div class="gc" style="left:900px;width:100px;font-size:10.75px">نیما طب ارومیه</div>
<div class="gc" style="left:800px;width:100px;letter-spacing:-.6px;padding-right:5px">TRULAB N</div>
<div class="gc" style="left:700px;width:100px"></div>
<div class="gc" style="left:600px;width:100px">3</div>
<div class="gc" style="left:500px;width:100px">3</div>
<div class="gc" style="left:400px;width:100px;letter-spacing:-.6px;padding-right:5px">TRULAB N</div>
<div class="gc" style="left:200px;width:200px"></div>
<div class="gc" style="left:100px;width:100px">یخچال1</div>
<div class="gc" style="left:0px;width:100px">117099</div>
</div>
<div class="rh" style="top:442px"></div>
<div class="gr " style="top:466px">
<div class="gc" style="left:1500px;width:100px">213</div>
<div class="gc" style="left:1400px;width:100px">1403/2/11</div>
<div class="gc" style="left:1300px;width:100px;font-size:11.6px;padding-top:5px">مسئول فني</div>
<div class="gc" style="left:1200px;width:100px">35</div>
<div class="gc" style="left:1100px;width:100px">1403/02/11</div>
<div class="gc" style="left:1000px;width:100px">1403/2/11</div>
<div class="gc" style="left:900px;width:100px;font-size:10.75px">نیما طب ارومیه</div>
<div class="gc" style="left:800px;width:100px;letter-spacing:-.6px;padding-right:5px">TRULAB P</div>
<div class="gc" style="left:700px;width:100px"></div>
<div class="gc" style="left:600px;width:100px">3</div>
<div class="gc" style="left:500px;width:100px">3</div>
<div class="gc" style="left:400px;width:100px;letter-spacing:-.6px;padding-right:5px">TRULAB P</div>
<div class="gc" style="left:200px;width:200px"></div>
<div class="gc" style="left:100px;width:100px">یخچال1</div>
<div class="gc" style="left:0px;width:100px">179999</div>
</div>
<div class="rh" style="top:466px"></div>
<div class="gr " style="top:490px">
<div class="gc" style="left:1500px;width:100px">214</div>
<div class="gc" style="left:1400px;width:100px">1403/2/11</div>
<div class="gc" style="left:1300px;width:100px;font-size:11.6px;padding-top:5px">مسئول فني</div>
<div class="gc" style="left:1200px;width:100px">35</div>
<div class="gc" style="left:1100px;width:100px">1403/02/11</div>
<div class="gc" style="left:1000px;width:100px">1403/2/11</div>
<div class="gc" style="left:900px;width:100px;font-size:10.75px">نیما طب ارومیه</div>
<div class="gc" style="left:800px;width:100px;letter-spacing:-.6px;padding-right:5px">C.FAS</div>
<div class="gc" style="left:700px;width:100px"></div>
<div class="gc" style="left:600px;width:100px">3</div>
<div class="gc" style="left:500px;width:100px">3</div>
<div class="gc" style="left:400px;width:100px"></div>
<div class="gc" style="left:200px;width:200px"></div>
<div class="gc" style="left:100px;width:100px"></div>
<div class="gc" style="left:0px;width:100px">124199</div>
</div>
<div class="rh" style="top:490px"></div>
<div class="gr r" style="top:514px">
<div class="gc" style="left:1500px;width:100px">215</div>
<div class="gc" style="left:1400px;width:100px">1403/5/7</div>
<div class="gc" style="left:1300px;width:100px;font-size:11.6px;padding-top:5px">مسئول فني</div>
<div class="gc" style="left:1200px;width:100px">36</div>
<div class="gc" style="left:1100px;width:100px">1403/02/11</div>
<div class="gc" style="left:1000px;width:100px">1403/2/11</div>
<div class="gc" style="left:900px;width:100px;font-size:10.75px">نیما طب ارومیه</div>
<div class="gc" style="left:800px;width:100px">B2میکروگلوبولین</div>
<div class="gc" style="left:700px;width:100px">1</div>
<div class="gc" style="left:600px;width:100px">1</div>
<div class="gc" style="left:500px;width:100px">1</div>
<div class="gc" style="left:400px;width:100px">میکروگلوبولین</div>
<div class="gc" style="left:200px;width:200px">1403/2/11</div>
<div class="gc" style="left:100px;width:100px">یخچال1</div>
<div class="gc" style="left:0px;width:100px">420207</div>
</div>
<div class="rh" style="top:514px"></div>
<div class="gr " style="top:538px">
<div class="gc" style="left:1500px;width:100px">216</div>
<div class="gc" style="left:1400px;width:100px">1403/5/7</div>
<div class="gc" style="left:1300px;width:100px;font-size:11.6px;padding-top:5px">مسئول فني</div>
<div class="gc" style="left:1200px;width:100px">36</div>
<div class="gc" style="left:1100px;width:100px">1403/02/11</div>
<div class="gc" style="left:1000px;width:100px">1403/2/11</div>
<div class="gc" style="left:900px;width:100px;font-size:10.75px">نیما طب ارومیه</div>
<div class="gc" style="left:800px;width:100px;letter-spacing:-.6px;padding-right:5px">HBA1C</div>
<div class="gc" style="left:700px;width:100px">1</div>
<div class="gc" style="left:600px;width:100px">2</div>
<div class="gc" style="left:500px;width:100px">2</div>
<div class="gc" style="left:400px;width:100px;letter-spacing:-.6px;padding-right:5px">HBA1C</div>
<div class="gc" style="left:200px;width:200px">1403/5/11</div>
<div class="gc" style="left:100px;width:100px">یخچال1</div>
<div class="gc" style="left:0px;width:100px">423782</div>
</div>
<div class="rh" style="top:538px"></div>
<div class="gr b" style="top:562px">
<div class="gc" style="left:1500px;width:100px">217</div>
<div class="gc" style="left:1400px;width:100px">1403/5/7</div>
<div class="gc" style="left:1300px;width:100px;font-size:11.6px;padding-top:5px">مسئول فني</div>
<div class="gc" style="left:1200px;width:100px">36</div>
<div class="gc" style="left:1100px;width:100px">1403/02/11</div>
<div class="gc" style="left:1000px;width:100px">1403/2/11</div>
<div class="gc" style="left:900px;width:100px;font-size:10.75px">نیما طب ارومیه</div>
<div class="gc" style="left:800px;width:100px;letter-spacing:-.6px;padding-right:5px">HBA1C CONT</div>
<div class="gc" style="left:700px;width:100px">1</div>
<div class="gc" style="left:600px;width:100px">1</div>
<div class="gc" style="left:500px;width:100px">1</div>
<div class="gc" style="left:400px;width:100px;letter-spacing:-.6px;padding-right:5px">HBA1C CONT</div>
<div class="gc" style="left:200px;width:200px"></div>
<div class="gc" style="left:100px;width:100px">یخچال1</div>
<div class="gc" style="left:0px;width:100px">423838</div>
</div>
<div class="rh" style="top:562px"></div>
<div class="gr " style="top:586px">
<div class="gc" style="left:1500px;width:100px">219</div>
<div class="gc" style="left:1400px;width:100px">1403/5/11</div>
<div class="gc" style="left:1300px;width:100px;font-size:11.6px;padding-top:5px">مسئول فني</div>
<div class="gc" style="left:1200px;width:100px">36</div>
<div class="gc" style="left:1100px;width:100px">1403/02/11</div>
<div class="gc" style="left:1000px;width:100px">1403/2/11</div>
<div class="gc" style="left:900px;width:100px;font-size:10.75px">نیما طب ارومیه</div>
<div class="gc" style="left:800px;width:100px">کیت کراتنین</div>
<div class="gc" style="left:700px;width:100px">3</div>
<div class="gc" style="left:600px;width:100px">3</div>
<div class="gc" style="left:500px;width:100px">3</div>
<div class="gc" style="left:400px;width:100px">کیت کراتنین</div>
<div class="gc" style="left:200px;width:200px"></div>
<div class="gc" style="left:100px;width:100px">یخچال1</div>
<div class="gc" style="left:0px;width:100px">424736</div>
</div>
<div class="rh" style="top:586px"></div>
<div class="gr " style="top:610px">
<div class="gc" style="left:1500px;width:100px">221</div>
<div class="gc" style="left:1400px;width:100px">1403/5/7</div>
<div class="gc" style="left:1300px;width:100px;font-size:11.6px;padding-top:5px">مسئول فني</div>
<div class="gc" style="left:1200px;width:100px">36</div>
<div class="gc" style="left:1100px;width:100px">1403/02/11</div>
<div class="gc" style="left:1000px;width:100px">1403/2/11</div>
<div class="gc" style="left:900px;width:100px;font-size:10.75px">نیما طب ارومیه</div>
<div class="gc" style="left:800px;width:100px">کیت RF</div>
<div class="gc" style="left:700px;width:100px">1</div>
<div class="gc" style="left:600px;width:100px">1</div>
<div class="gc" style="left:500px;width:100px">1</div>
<div class="gc" style="left:400px;width:100px;letter-spacing:-.6px;padding-right:5px">RF</div>
<div class="gc" style="left:200px;width:200px"></div>
<div class="gc" style="left:100px;width:100px">یخچال1</div>
<div class="gc" style="left:0px;width:100px">1800424</div>
</div>
<div class="rh" style="top:610px"></div>
<div class="a" style="left:0;top:0;width:17px;height:623px;background:#f0f0f0"></div>
<div class="a" style="left:1px;top:34px;width:15px;height:17px;background:#cdcdcd"></div>
<div class="a" style="left:0;top:623px;width:1658px;height:16px;background:#f0f0f0"></div>
<div class="a" style="left:812px;top:623px;width:829px;height:15px;background:#cdcdcd"></div>
<svg class="a" style="left:0;top:0" width="1658" height="639" viewBox="0 0 1658 639">
<polygon points="4.8,12.0 8.5,8.6 12.2,12.0 12.2,9.0 8.5,5.6 4.8,9.0" fill="#555"/>
<polygon points="4.8,611.0 8.5,614.4 12.2,611.0 12.2,614.0 8.5,617.4 4.8,614.0" fill="#555"/>
<polygon points="28.4,627.0 25.0,630.5 28.4,634.1 25.3,634.1 21.9,630.5 25.3,627.0" fill="#555"/>
<polygon points="1646.8,627.0 1650.2,630.5 1646.8,634.1 1649.9,634.1 1653.3,630.5 1649.9,627.0" fill="#555"/>
</svg>
</div>
<div class="a" style="left:0;top:1009px;width:1679px;height:40px;background:#7878fc;border-radius:0 0 9px 12px;overflow:hidden"><div class="a" style="left:0;top:0;width:260px;height:40px;background:#90ee90;text-align:center;direction:rtl;font-size:12.4px;line-height:40px">آزمایشگاه دیمیک</div><div class="a" style="left:260px;top:0;width:115px;height:40px;background:#00bfff;text-align:center;direction:rtl;font-size:11.3px;line-height:41px">تاریخ:1403/11/25</div><div class="a" style="left:378px;top:9px;width:220px;height:16px;color:#fff;font-size:12px;line-height:15px;white-space:nowrap"><span class="a" style="right:3px;top:0;direction:rtl;font-size:13.4px">پشتیبانی</span><span class="a" style="left:139px;top:0;font-size:12.4px;letter-spacing:.5px">24/7</span><span class="a" style="left:91px;top:0;direction:rtl;font-size:12.3px;word-spacing:1px">10 خط</span><span class="a" style="left:0;top:0;font-size:12.3px">021-9131-2424</span></div><div class="a" style="left:1385px;top:0;width:295px;height:40px;background:#00bfff"></div><div class="a" style="left:1385px;top:0;width:95px;height:40px;text-align:center;direction:rtl;font-size:12px;line-height:41px">دفترچه تلفن</div><div class="a" style="left:1529px;top:0;width:100px;height:40px;text-align:center;direction:rtl;font-size:12.7px;line-height:41px">مسئول فنی</div></div>
<div class="a" style="left:197px;top:1049px;width:48px;height:1px;background:#8ab8f0"></div><div class="a" style="left:250px;top:1049px;width:31px;height:1px;background:#8ab8f0"></div><div class="a" style="left:281px;top:1049px;width:9px;height:1px;background:#8090a0"></div><div class="a" style="left:299px;top:1049px;width:39px;height:1px;background:#8ab8f0"></div>
</body></html>
